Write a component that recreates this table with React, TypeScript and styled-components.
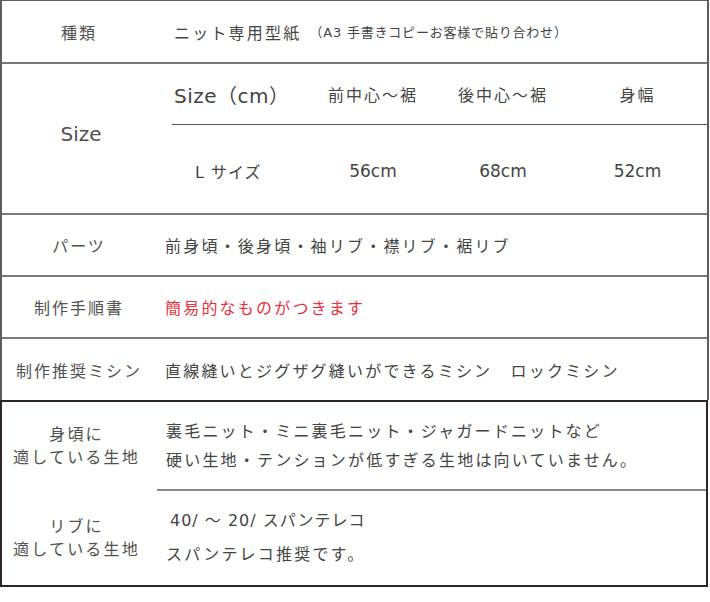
import styled, { createGlobalStyle } from 'styled-components'

const GlobalStyle = createGlobalStyle`
    body {
        margin: 0;
        background: #ffffff;
        font-family: "DejaVu Sans", "Noto Sans CJK JP", sans-serif;
        color: #444444;
    }
`

const sizeHeaders = ['前中心～裾', '後中心～裾', '身幅']
const sizeRows = [{ name: 'L サイズ', values: ['56cm', '68cm', '52cm'] }]

export default function App() {
    return (
        <>
            <GlobalStyle />
            <Frame>
                <TopSection>
                    <Row $height={61}>
                        <Label>種類</Label>
                        <Content $pad={18}>
                            ニット専用型紙
                            <Note>（A3 手書きコピーお客様で貼り合わせ）</Note>
                        </Content>
                    </Row>

                    <Row $height={149}>
                        <SizeLabel>Size</SizeLabel>
                        <SizeTable>
                            <SizeHead>
                                <SizeTitle>Size（cm）</SizeTitle>
                                {sizeHeaders.map(h => (
                                    <HeadCell key={h}>{h}</HeadCell>
                                ))}
                            </SizeHead>
                            {sizeRows.map(r => (
                                <SizeBody key={r.name}>
                                    <RowName>{r.name}</RowName>
                                    {r.values.map((v, i) => (
                                        <ValueCell key={i}>{v}</ValueCell>
                                    ))}
                                </SizeBody>
                            ))}
                        </SizeTable>
                    </Row>

                    <Row $height={60}>
                        <Label>パーツ</Label>
                        <Content>前身頃・後身頃・袖リブ・襟リブ・裾リブ</Content>
                    </Row>

                    <Row $height={60}>
                        <Label>制作手順書</Label>
                        <Content $red>簡易的なものがつきます</Content>
                    </Row>

                    <Row $height={61} $last>
                        <Label>制作推奨ミシン</Label>
                        <Content>直線縫いとジグザグ縫いができるミシン　ロックミシン</Content>
                    </Row>
                </TopSection>

                <BottomSection>
                    <FabricRow $height={87}>
                        <FabricLabel>身頃に<br />適している生地</FabricLabel>
                        <FabricText $lh={29}>
                            <Line>裏毛ニット・ミニ裏毛ニット・ジャガードニットなど</Line>
                            <Line>硬い生地・テンションが低すぎる生地は向いていません。</Line>
                        </FabricText>
                    </FabricRow>
                    <FabricRow $height={94} $last>
                        <FabricLabel>リブに<br />適している生地</FabricLabel>
                        <FabricText $lh={34}>
                            <Line $indent={4} $tight>40/ ～ 20/ スパンテレコ</Line>
                            <Line>スパンテレコ推奨です。</Line>
                        </FabricText>
                    </FabricRow>
                </BottomSection>
            </Frame>
        </>
    )
}

/* ===========================
   styled-components
   =========================== */

const Frame = styled.div`
    width: 710px;
    height: 602px;
    box-sizing: border-box;
`

const TopSection = styled.div`
    width: 709px;
    box-sizing: border-box;
    border: 2px solid #5e5e5e;
    border-top-width: 1px;
    border-bottom: none;
`

const Row = styled.div<{ $height: number; $last?: boolean }>`
    display: flex;
    height: ${p => p.$height}px;
    border-bottom: ${p => (p.$last ? 'none' : '2px solid #7a7a7a')};
`

const Label = styled.div`
    width: 154px;
    flex-shrink: 0;
    display: flex;
    align-items: center;
    justify-content: center;
    font-size: 16px;
    letter-spacing: 2px;
    color: #505050;
`

const Content = styled.div<{ $pad?: number; $red?: boolean }>`
    flex: 1;
    display: flex;
    align-items: center;
    padding-left: ${p => p.$pad ?? 9}px;
    font-size: 16px;
    letter-spacing: 2.2px;
    color: ${p => (p.$red ? '#e8303a' : '#444444')};
    white-space: nowrap;
`

const Note = styled.span`
    margin-left: 8px;
    font-size: 13px;
    letter-spacing: 0.8px;
    color: #444444;
`

const SizeLabel = styled.div`
    width: 158px;
    padding-right: 12px;
    padding-bottom: 10px;
    flex-shrink: 0;
    display: flex;
    align-items: center;
    justify-content: center;
    font-size: 20px;
    color: #505050;
`

const SizeTable = styled.div`
    flex: 1;
    display: flex;
    flex-direction: column;
`

const SizeHead = styled.div`
    height: 60px;
    display: grid;
    grid-template-columns: 136px 130px 130px 1fr;
    align-items: center;
    border-bottom: 1px solid #555555;
`

const SizeBody = styled.div`
    flex: 1;
    display: grid;
    grid-template-columns: 136px 130px 130px 1fr;
    align-items: center;
    padding-top: 3px;
`

const SizeTitle = styled.div`
    padding-left: 2px;
    font-size: 20px;
    letter-spacing: 0.5px;
    color: #444444;
    white-space: nowrap;
`

const HeadCell = styled.div`
    text-align: center;
    font-size: 16px;
    letter-spacing: 2px;
    color: #444444;
`

const RowName = styled.div`
    padding-left: 23px;
    font-size: 16px;
    letter-spacing: 1px;
    color: #444444;
`

const ValueCell = styled.div`
    text-align: center;
    font-size: 17px;
    color: #444444;
`

const BottomSection = styled.div`
    width: 708px;
    box-sizing: border-box;
    border: 2px solid #2e2626;
`

const FabricRow = styled.div<{ $height: number; $last?: boolean }>`
    display: flex;
    height: ${p => p.$height}px;
    ${p => (p.$last ? '' : 'border-bottom: 2px solid #8a8a8a;')}
    margin-left: 155px;
`

const FabricLabel = styled.div`
    width: 155px;
    margin-left: -155px;
    padding-right: 6px;
    box-sizing: border-box;
    flex-shrink: 0;
    display: flex;
    align-items: center;
    justify-content: center;
    text-align: center;
    font-size: 16px;
    line-height: 23px;
    letter-spacing: 2.2px;
    color: #505050;
`

const FabricText = styled.div<{ $lh: number }>`
    flex: 1;
    display: flex;
    flex-direction: column;
    justify-content: center;
    padding-left: 9px;
    font-size: 16px;
    line-height: ${p => p.$lh}px;
    letter-spacing: 2.2px;
    color: #444444;
    white-space: nowrap;
`

const Line = styled.div<{ $indent?: number; $tight?: boolean }>`
    padding-left: ${p => p.$indent ?? 0}px;
    ${p => (p.$tight ? 'letter-spacing: 1px;' : '')}
`
